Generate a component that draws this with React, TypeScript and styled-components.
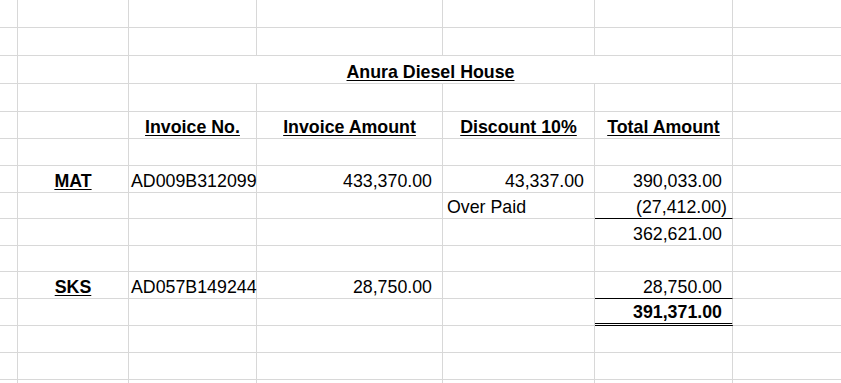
import styled, { createGlobalStyle } from "styled-components";

const GlobalStyle = createGlobalStyle`
    html, body {
        margin: 0;
        padding: 0;
        background: #ffffff;
    }
    body {
        overflow: hidden;
    }
`;

// measured from the sheet: column widths include the 1px gridline on the right
const COL_WIDTHS = [18, 111, 128, 186, 152, 138, 120];
const ROW_HEIGHTS = [28, 28, 28, 28, 27, 27, 27, 26, 27, 26, 27, 27, 27, 27, 27];

const GRID = "#d8d8d8";

type Align = "left" | "center" | "right";
type Rule = "single" | "double";

interface CellSpec {
    col: number;
    span?: number;
    text?: string;
    align?: Align;
    bold?: boolean;
    underline?: boolean;
    rule?: Rule;
    pad?: number;
}

const Sheet = styled.div`
    display: grid;
    grid-template-columns: ${COL_WIDTHS.map((w) => `${w}px`).join(" ")};
    grid-template-rows: ${ROW_HEIGHTS.map((h) => `${h}px`).join(" ")};
    width: 841px;
    height: 383px;
    overflow: hidden;
    background: #ffffff;
    color: #000000;
    font-family: "Liberation Sans", Arial, sans-serif;
    font-size: 17.8px;
`;

const Cell = styled.div<{ $align: Align; $bold: boolean; $underline: boolean; $rule?: Rule; $pad: number; $span: number }>`
    box-sizing: border-box;
    grid-column: span ${(p) => p.$span};
    display: flex;
    align-items: flex-end;
    justify-content: ${(p) => (p.$align === "left" ? "flex-start" : p.$align === "right" ? "flex-end" : "center")};
    padding: 0 ${(p) => (p.$align === "right" ? p.$pad : 0)}px 0 ${(p) => (p.$align === "left" ? p.$pad : 0)}px;
    border-right: 1px solid ${GRID};
    border-bottom: ${(p) =>
        p.$rule === "double" ? "3px double #000000" : p.$rule === "single" ? "1px solid #000000" : `1px solid ${GRID}`};
    font-weight: ${(p) => (p.$bold ? 700 : 400)};
    text-decoration: ${(p) => (p.$underline ? "underline" : "none")};
    text-decoration-thickness: 1px;
    text-underline-offset: 2px;
    line-height: 1.2;
    white-space: nowrap;
`;

const heading = (col: number, text: string): CellSpec => ({ col, text, align: "center", bold: true, underline: true });
const amount = (col: number, text: string, extra: Partial<CellSpec> = {}): CellSpec => ({
    col,
    text,
    align: "right",
    pad: 10,
    ...extra,
});

const ROWS: CellSpec[][] = [
    [],
    [],
    [{ col: 2, span: 4, text: "Anura Diesel House", align: "center", bold: true, underline: true }],
    [],
    [heading(2, "Invoice No."), heading(3, "Invoice Amount"), heading(4, "Discount 10%"), heading(5, "Total Amount")],
    [],
    [
        heading(1, "MAT"),
        { col: 2, text: "AD009B312099", align: "left", pad: 2 },
        amount(3, "433,370.00"),
        amount(4, "43,337.00"),
        amount(5, "390,033.00"),
    ],
    [
        { col: 4, text: "Over Paid", align: "left", pad: 4 },
        amount(5, "(27,412.00)", { pad: 5, rule: "single" }),
    ],
    [amount(5, "362,621.00")],
    [],
    [
        heading(1, "SKS"),
        { col: 2, text: "AD057B149244", align: "left", pad: 2 },
        amount(3, "28,750.00"),
        amount(5, "28,750.00", { rule: "single" }),
    ],
    [amount(5, "391,371.00", { bold: true, rule: "double" })],
    [],
    [],
    [],
];

function fillRow(specs: CellSpec[]): CellSpec[] {
    const out: CellSpec[] = [];
    let col = 0;
    while (col < COL_WIDTHS.length) {
        const spec = specs.find((s) => s.col === col);
        if (spec) {
            out.push(spec);
            col += spec.span ?? 1;
        } else {
            out.push({ col });
            col += 1;
        }
    }
    return out;
}

export default function App() {
    return (
        <>
            <GlobalStyle />
            <Sheet>
                {ROWS.map((row, r) =>
                    fillRow(row).map((c) => (
                        <Cell
                            key={`${r}-${c.col}`}
                            $align={c.align ?? "left"}
                            $bold={!!c.bold}
                            $underline={!!c.underline}
                            $rule={c.rule}
                            $pad={c.pad ?? 0}
                            $span={c.span ?? 1}
                        >
                            {c.text}
                        </Cell>
                    ))
                )}
            </Sheet>
        </>
    );
}
